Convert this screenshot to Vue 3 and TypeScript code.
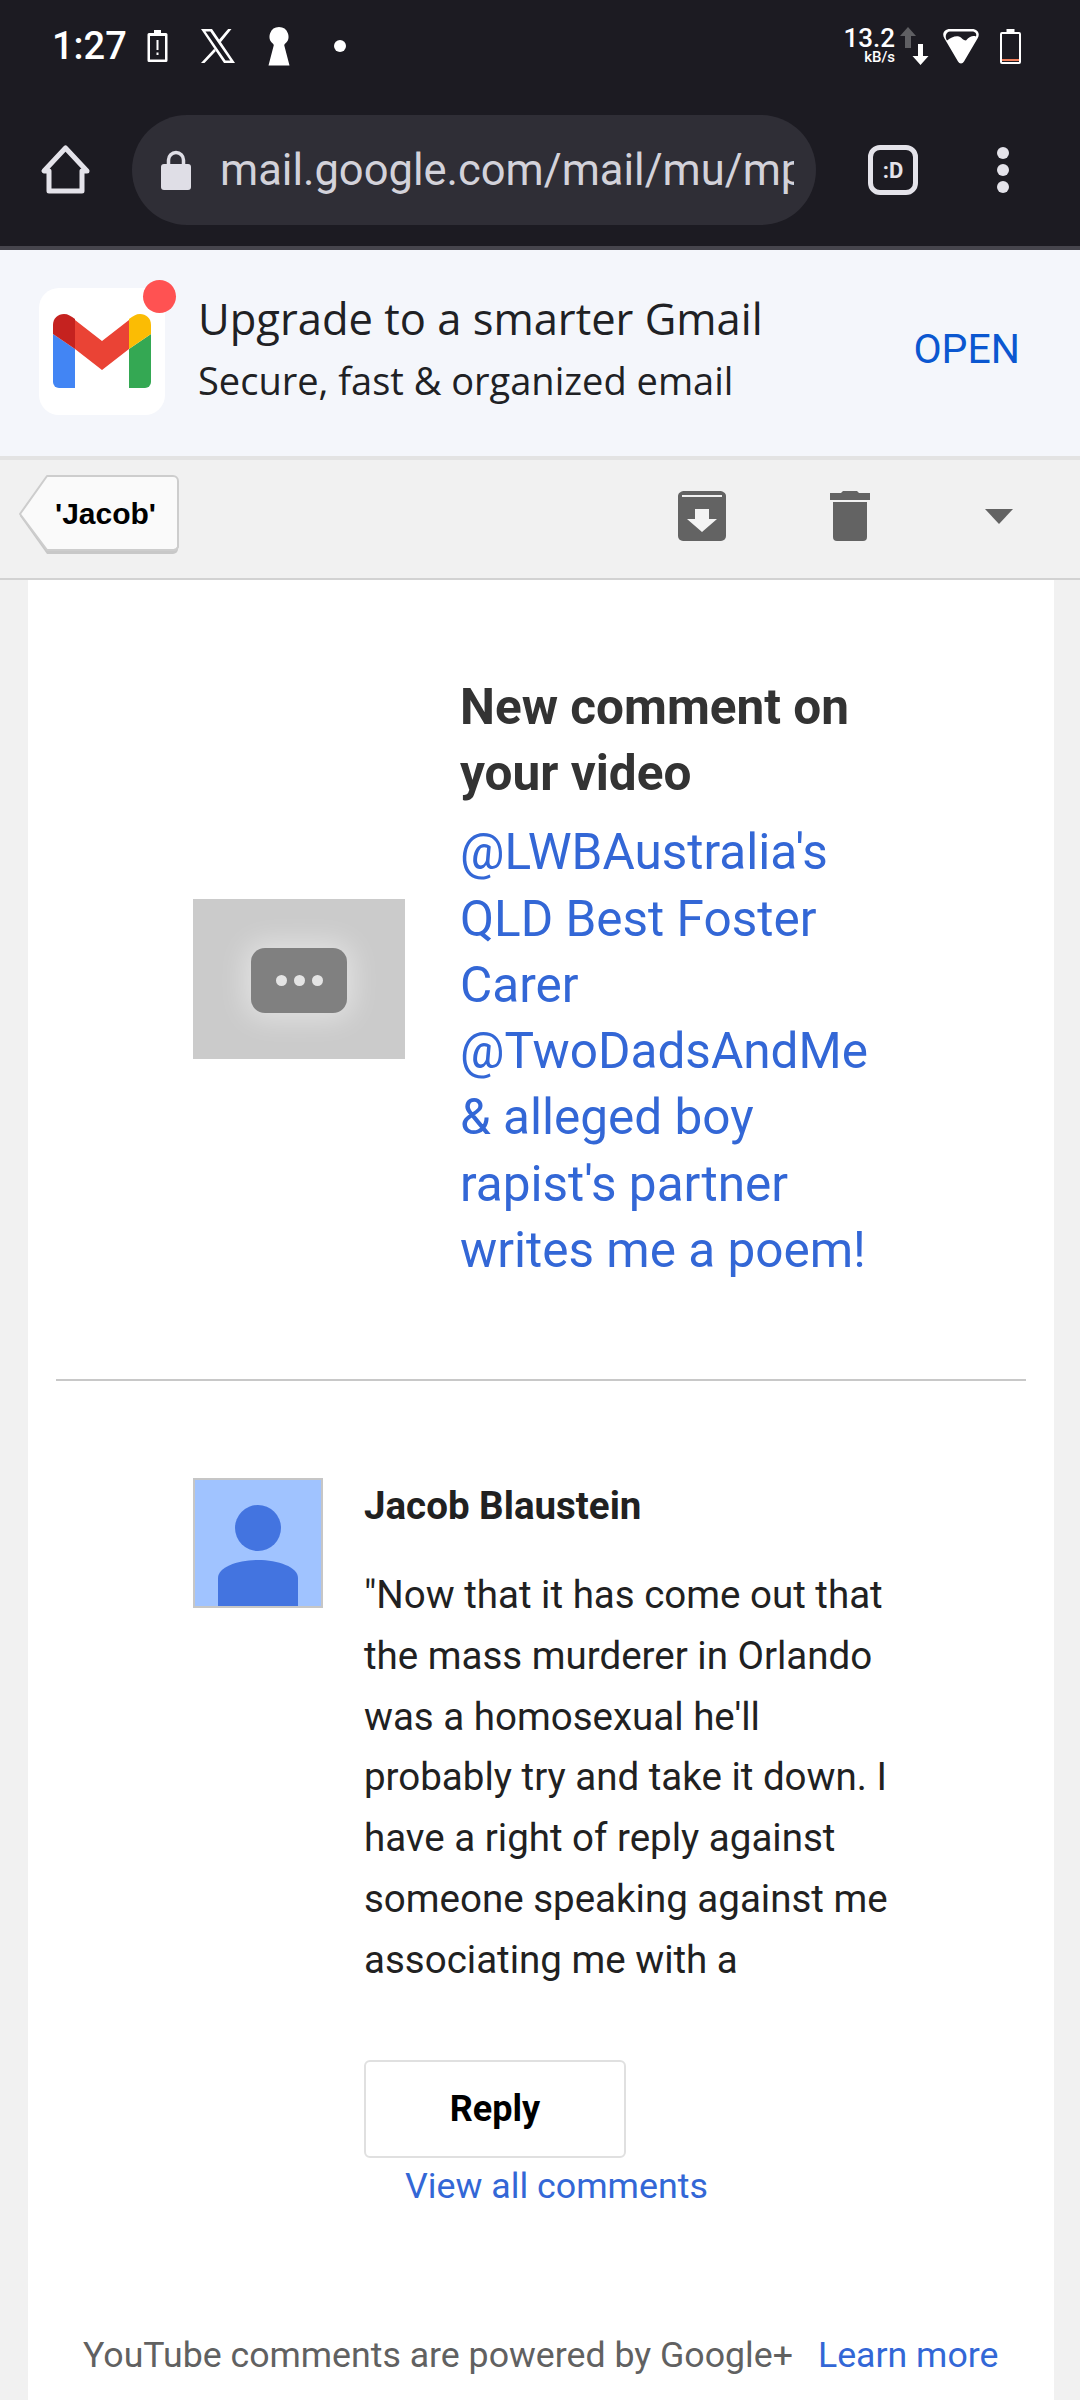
<script setup lang="ts">
const titleLines = ['New comment on', 'your video'];
const linkLines = [
  "@LWBAustralia's",
  'QLD Best Foster',
  'Carer',
  '@TwoDadsAndMe',
  '& alleged boy',
  "rapist's partner",
  'writes me a poem!',
];
const commentLines = [
  '"Now that it has come out that',
  'the mass murderer in Orlando',
  "was a homosexual he'll",
  'probably try and take it down. I',
  'have a right of reply against',
  'someone speaking against me',
  'associating me with a',
];
</script>

<template>
  <div class="page">
    <header class="chrome">
      <div class="status">
        <span class="time">1:27</span>
        <svg class="st-alert" width="21" height="34" viewBox="0 0 21 34">
          <path d="M7 1h7v3h5a1.500 1.500 0 0 1 1.500 1.500v26a1.500 1.500 0 0 1-1.500 1.500H2a1.500 1.500 0 0 1-1.500-1.500v-26A1.500 1.500 0 0 1 2 4h5z" fill="#fff" />
          <rect x="3" y="7" width="15" height="23.500" fill="#1c1b22" />
          <rect x="9.500" y="11" width="2" height="10" fill="#fff" />
          <rect x="9.500" y="23.500" width="2" height="2.500" fill="#fff" />
        </svg>
        <svg class="st-x" width="36" height="34" viewBox="0 0 36 34">
          <path d="M1 0h11l23 34H24zM5.500 2.400 25.500 31.600h4.800L10.300 2.400z" fill="#fff" fill-rule="evenodd" />
          <path d="M31.500 0h-3.400L18.800 11l1.800 2.500zM14.200 19.800 1 34h3.500l11.400-12z" fill="#fff" />
        </svg>
        <svg class="st-key" width="22" height="39" viewBox="0 0 22 39">
          <path d="M11 0a9.500 9.500 0 0 1 6 16.800c-.6.5-.8 1-.7 1.700L21.500 38.500H.5L5.700 18.500c.1-.7-.1-1.200-.7-1.700A9.500 9.500 0 0 1 11 0z" fill="#fff" />
        </svg>
        <span class="st-dot"></span>

        <div class="speed">
          <span class="speed-num">13.2</span>
          <span class="speed-unit">kB/s</span>
        </div>
        <svg class="st-arrows" width="29" height="39" viewBox="0 0 29 39">
          <path d="M8 0l8 9h-5v12H5V9H0z" fill="#5f5f63" />
          <path d="M18 17h5v12h5.500l-8 9-8-9H18z" fill="#fff" />
        </svg>
        <svg class="st-wifi" width="36" height="35" viewBox="0 0 36 35">
          <path d="M7 0h22c6 0 8.500 5 5.500 9.500L21 32.500c-1.500 2.500-4.500 2.500-6 0L1.500 9.500C-1.500 5 1 0 7 0z" fill="#fff" />
          <path d="M7 2.500h22c3.500 0 5 2.500 4 5-3-1-6-.5-10 4-3 0-4-3-7-4-4-1-8 1-12 4C1.500 8 3 2.500 7 2.500z" fill="#1c1b22" />
        </svg>
        <svg class="st-batt" width="21" height="35" viewBox="0 0 21 35">
          <path d="M6.500 0h8v3H19a2 2 0 0 1 2 2v28a2 2 0 0 1-2 2H2a2 2 0 0 1-2-2V5a2 2 0 0 1 2-2h4.500z" fill="#fff" />
          <rect x="2" y="5" width="17" height="28" fill="#1c1b22" />
          <rect x="2" y="30" width="17" height="2" fill="#f0805c" />
        </svg>
      </div>

      <div class="toolbar">
        <svg class="home" width="52" height="52" viewBox="0 0 52 52">
          <path d="M25.500 4 4 27h5v20h33V27h5z" fill="none" stroke="#e4e3ea" stroke-width="5" stroke-linejoin="round" />
        </svg>
        <div class="omnibox">
          <svg class="lock" width="30" height="40" viewBox="0 0 30 40">
            <path d="M7.500 15V10a7.500 7.500 0 0 1 15 0v5" fill="none" stroke="#dfdee6" stroke-width="3.500" />
            <rect x="0" y="14" width="30" height="26" rx="3" fill="#dfdee6" />
          </svg>
          <span class="url">mail.google.com/mail/mu/mp/</span>
        </div>
        <div class="tabs">:D</div>
        <div class="more"><i></i><i></i><i></i></div>
      </div>
    </header>

    <section class="banner">
      <div class="app-icon">
        <svg width="98" height="74" viewBox="0 0 98 74">
          <path d="M0 20v48a6 6 0 0 0 6 6h16V35z" fill="#4285f4" />
          <path d="M98 20v48a6 6 0 0 1-6 6H76V35z" fill="#34a853" />
          <path d="M22 6 49 27 76 6v29L49 56 22 35z" fill="#ea4335" />
          <path d="M0 20v-9C0 4 5 0 11 0c4 0 7 2 11 5v30z" fill="#c5221f" />
          <path d="M98 20v-9C98 4 93 0 87 0c-4 0-7 2-11 5v30z" fill="#fbbc04" />
        </svg>
        <span class="badge"></span>
      </div>
      <div class="banner-copy">
        <div class="banner-title">Upgrade to a smarter Gmail</div>
        <div class="banner-sub">Secure, fast &amp; organized email</div>
      </div>
      <a class="open">OPEN</a>
    </section>

    <nav class="mail-bar">
      <button class="back">
        <svg class="back-shape" width="162" height="82" viewBox="0 0 162 82">
          <path d="M29 3h126a5 5 0 0 1 5 5v66a5 5 0 0 1-5 5H29L2 41z" fill="#c8c8c8" />
          <path d="M29 1h126a5 5 0 0 1 5 5v66a5 5 0 0 1-5 3H29L2 39z" fill="#fafafa" stroke="#cdcdcd" stroke-width="2" stroke-linejoin="round" />
        </svg>
        <span>'Jacob'</span>
      </button>
      <svg class="archive" width="50" height="50" viewBox="0 0 50 50">
        <path d="M8 0h34c4 0 7 2 7 5v40a5 5 0 0 1-5 5H6a5 5 0 0 1-5-5V5c0-3 3-5 7-5z" fill="#636363" />
        <rect x="5" y="4" width="40" height="2" fill="#f1f1f1" />
        <path d="M18 18h14v10h8L25 41 10 28h8z" fill="#f4f4f4" />
      </svg>
      <svg class="trash" width="40" height="50" viewBox="0 0 40 50">
        <path d="M13 0h14l2 2h11v7H0V2h11z" fill="#636363" />
        <path d="M3 11h34v35a4 4 0 0 1-4 4H7a4 4 0 0 1-4-4z" fill="#636363" />
      </svg>
      <svg class="caret" width="28" height="15" viewBox="0 0 28 15">
        <path d="M0 0h28L14 15z" fill="#636363" />
      </svg>
    </nav>

    <main class="card">
      <div class="video">
        <div class="thumb"><div class="thumb-btn"><i></i><i></i><i></i></div></div>
        <div class="video-text">
          <div v-for="line in titleLines" :key="line" class="video-title">{{ line }}</div>
          <a v-for="line in linkLines" :key="line" class="video-link">{{ line }}</a>
        </div>
      </div>

      <hr class="divider" />

      <div class="comment">
        <svg class="avatar" width="130" height="130" viewBox="0 0 130 130">
          <rect x="1" y="1" width="128" height="128" fill="#a0c3ff" stroke="#c6c6c6" stroke-width="2" />
          <circle cx="65" cy="50" r="23" fill="#4374e0" />
          <path d="M25 128V100c0-11 20-18 40-18s40 7 40 18v28z" fill="#4374e0" />
        </svg>
        <div class="comment-body">
          <div class="author">Jacob Blaustein</div>
          <div class="comment-text">
            <div v-for="line in commentLines" :key="line">{{ line }}</div>
          </div>
          <button class="reply">Reply</button>
          <a class="view-all">View all comments</a>
        </div>
      </div>

      <footer class="powered">
        <span>YouTube comments are powered by Google+</span>
        <a>Learn more</a>
      </footer>
    </main>
  </div>
</template>

<style scoped>
.page {
  width: 1080px;
  height: 2400px;
  overflow: hidden;
  display: flex;
  flex-direction: column;
  background: #f1f1f1;
  font-family: Roboto, sans-serif;
}

.chrome {
  height: 246px;
  flex-shrink: 0;
  background: #1c1b22;
  border-bottom: 4px solid #46454d;
}

.status {
  height: 92px;
  display: flex;
  align-items: center;
  padding: 0 59px 0 52px;
  color: #fff;
}

.time {
  font-size: 38px;
  font-weight: 500;
  width: 95px;
  margin-top: -1px;
}

.st-x { margin-left: 32px; }
.st-key { margin-left: 32px; }

.st-dot {
  width: 12px;
  height: 12px;
  margin-left: 44px;
  border-radius: 50%;
  background: #fff;
}

.speed {
  margin-left: auto;
  display: flex;
  flex-direction: column;
  align-items: flex-end;
  font-weight: 500;
}

.speed-num { font-size: 26px; line-height: 23px; }
.speed-unit { font-size: 15px; line-height: 15px; }

.st-arrows { margin-left: 5px; }
.st-wifi { margin-left: 14px; }
.st-batt { margin-left: 21px; }

.toolbar {
  height: 110px;
  display: flex;
  align-items: center;
  margin-top: 23px;
  padding-left: 40px;
}

.home { flex-shrink: 0; }

.omnibox {
  width: 684px;
  height: 110px;
  margin-left: 40px;
  padding: 0 22px 0 29px;
  box-sizing: border-box;
  display: flex;
  align-items: center;
  background: #2f2e36;
  border-radius: 55px;
}

.lock { flex-shrink: 0; }

.url {
  margin-left: 29px;
  font-size: 43.500px;
  color: #d3d2da;
  white-space: nowrap;
  overflow: hidden;
}

.tabs {
  width: 50px;
  height: 50px;
  margin-left: 52px;
  box-sizing: border-box;
  border: 5px solid #e4e3ea;
  border-radius: 12px;
  display: flex;
  align-items: center;
  justify-content: center;
  color: #e4e3ea;
  font-size: 22px;
  font-weight: 700;
}

.more {
  margin-left: 79px;
  display: flex;
  flex-direction: column;
  gap: 5px;
}

.more i {
  width: 12px;
  height: 12px;
  border-radius: 50%;
  background: #e4e3ea;
}

.banner {
  height: 206px;
  flex-shrink: 0;
  box-sizing: border-box;
  display: flex;
  align-items: center;
  padding: 0 60px 4px 39px;
  background: #f4f6fb;
}

.app-icon {
  position: relative;
  width: 126px;
  height: 127px;
  flex-shrink: 0;
  display: flex;
  align-items: center;
  justify-content: center;
  background: #fff;
  border-radius: 20px;
}

.badge {
  position: absolute;
  top: -8px;
  right: -11px;
  width: 33px;
  height: 33px;
  border-radius: 50%;
  background: #ff5252;
}

.banner-copy {
  margin: 0 0 5px 33px;
  color: #202124;
  font-family: "Open Sans", sans-serif;
}

.banner-title {
  font-size: 43.500px;
  line-height: 60px;
}

.banner-sub {
  margin-top: 3px;
  font-size: 38px;
  line-height: 56px;
}

.open {
  margin: 0 0 5px auto;
  font-size: 41px;
  color: #0b57d0;
}

.mail-bar {
  height: 124px;
  flex-shrink: 0;
  box-sizing: border-box;
  display: flex;
  align-items: center;
  padding: 0 0 6px 18px;
  background: #f1f1f1;
  border-top: 4px solid #e3e3e3;
  border-bottom: 2px solid #d2d2d2;
}

.back {
  position: relative;
  width: 162px;
  height: 82px;
  padding: 0 0 4px 13px;
  border: 0;
  background: none;
  font-family: "Liberation Sans", Arial, sans-serif;
  font-size: 30px;
  font-weight: 700;
  color: #000;
}

.back-shape {
  position: absolute;
  top: 0;
  left: 0;
}

.back span { position: relative; }

.archive { margin-left: 497px; }
.trash { margin-left: 103px; }
.caret { margin-left: 115px; }

.card {
  flex: 1;
  margin: 0 26px 0 28px;
  background: #fff;
}

.video {
  display: flex;
  align-items: center;
  height: 799px;
  box-sizing: border-box;
  padding: 0 0 2px 165px;
}

.thumb {
  width: 212px;
  height: 160px;
  flex-shrink: 0;
  display: flex;
  align-items: center;
  justify-content: center;
  background: #cbcbcb;
}

.thumb-btn {
  width: 96px;
  height: 65px;
  margin-top: 3px;
  display: flex;
  align-items: center;
  justify-content: center;
  gap: 7px;
  background: #808080;
  border-radius: 14px;
  box-shadow: 0 0 28px 6px rgba(255, 255, 255, 0.45);
}

.thumb-btn i {
  width: 11px;
  height: 11px;
  border-radius: 50%;
  background: #e4e4e4;
}

.video-text {
  margin-left: 55px;
  font-size: 49.500px;
  line-height: 66.200px;
}

.video-title {
  font-weight: 700;
  color: #333;
}

.video-link {
  display: block;
  color: #3367d6;
}

.video-title + .video-link { margin-top: 13px; }

.divider {
  height: 2px;
  margin: 0 28px;
  border: 0;
  background: #c8c8c8;
}

.comment {
  display: flex;
  padding: 97px 0 0 165px;
}

.avatar { flex-shrink: 0; }

.comment-body {
  position: relative;
  margin-left: 41px;
  font-size: 38.500px;
  color: #212121;
}

.author {
  font-weight: 700;
  line-height: 56px;
}

.comment-text {
  margin-top: 31px;
  line-height: 60.800px;
}

.reply {
  display: block;
  width: 262px;
  height: 98px;
  margin-top: 69px;
  background: #fff;
  border: 2px solid #e0e0e0;
  border-radius: 6px;
  font-family: Roboto, sans-serif;
  font-size: 36px;
  font-weight: 700;
  color: #000;
}

.view-all {
  display: block;
  margin: 6px 0 0 41px;
  font-size: 35.800px;
  line-height: 44px;
  color: #3367d6;
}

.powered {
  display: flex;
  margin-top: 123px;
  padding-left: 55px;
  font-size: 35.700px;
  line-height: 48px;
  color: #616161;
  white-space: nowrap;
}

.powered a {
  margin-left: 25px;
  color: #3367d6;
}
</style>
